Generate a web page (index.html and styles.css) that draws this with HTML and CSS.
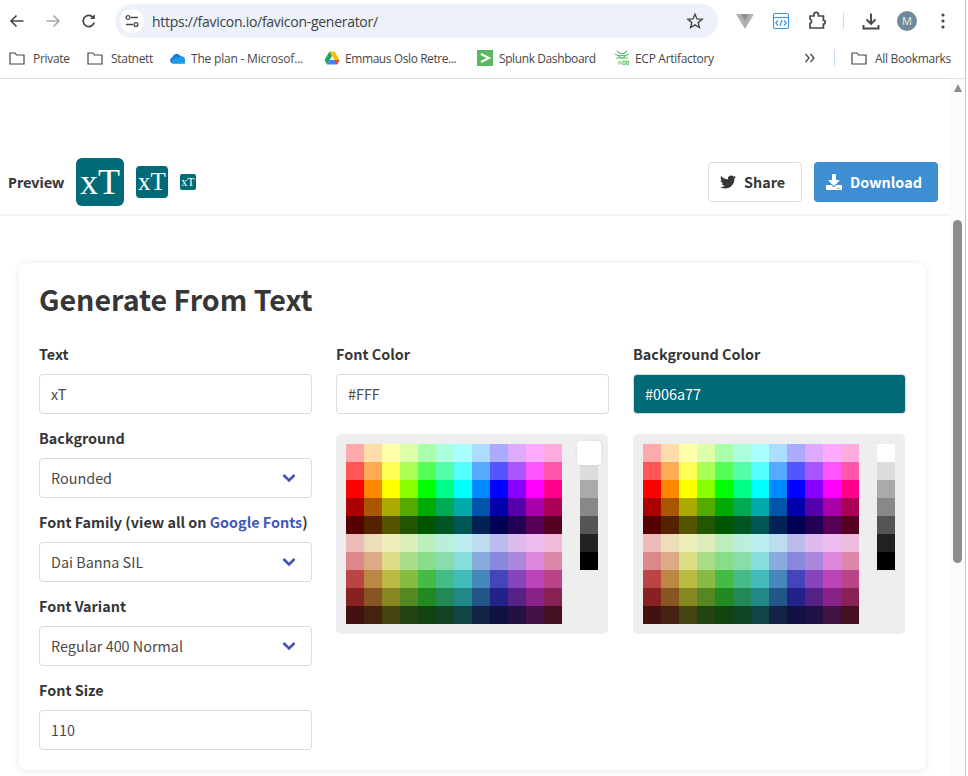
FILE: index.html
```html
<!DOCTYPE html>
<html lang="en">
<head>
<meta charset="utf-8">
<title>Favicon Generator</title>
<link rel="stylesheet" href="styles.css">
</head>
<body>
<div class="window">
  <div class="browser">
    <header class="chrome">
      <div class="toolbar">
        <svg class="tb-icon" viewBox="0 0 20 20"><path d="M16.500 10H4.500M9.500 4.500 4 10l5.500 5.500" fill="none" stroke="#474747" stroke-width="1.700"/></svg>
        <svg class="tb-icon" viewBox="0 0 20 20"><path d="M3.500 10h12M10.500 4.500 16 10l-5.500 5.500" fill="none" stroke="#ababab" stroke-width="1.700"/></svg>
        <svg class="tb-icon" viewBox="0 0 20 20"><path d="M15.200 11.500A5.600 5.600 0 1 1 14 6.300" fill="none" stroke="#474747" stroke-width="1.700"/><path d="M15.800 3.300v4.800H11z" fill="#474747"/></svg>
        <div class="omnibox">
          <span class="tune"><svg class="tune-svg" viewBox="0 0 16 16"><path d="M7 4.500h7M2 11.500h7" fill="none" stroke="#474747" stroke-width="1.400"/><circle cx="4" cy="4.500" r="1.900" fill="none" stroke="#474747" stroke-width="1.300"/><circle cx="12" cy="11.500" r="1.900" fill="none" stroke="#474747" stroke-width="1.300"/></svg></span>
          <span class="url">https://favicon.io/favicon-generator/</span>
          <svg class="star" viewBox="0 0 20 20"><path d="m10 3.200 2 4.700 5.100.4-3.900 3.300 1.200 5L10 13.900 5.600 16.600l1.200-5-3.900-3.300 5.100-.4z" fill="none" stroke="#474747" stroke-width="1.400"/></svg>
        </div>
        <div class="tb-right">
          <svg class="tb-icon" viewBox="0 0 20 20"><path d="M1 3h18l-9 15z" fill="#b0b0b0"/><path d="M6 3h8l-4 7z" fill="#8f8f8f"/></svg>
          <svg class="tb-icon" viewBox="0 0 20 20"><rect x="2.500" y="2.500" width="15" height="15" rx="1.500" fill="none" stroke="#3f93e6" stroke-width="1.100"/><path d="M2.500 6.500h15" stroke="#3f93e6" stroke-width="1.100"/><path d="M7 9.500 4.800 12 7 14.500M13 9.500l2.200 2.500-2.200 2.500M11 9l-2 6" fill="none" stroke="#3f93e6" stroke-width="1.200"/></svg>
          <svg class="tb-icon" viewBox="0 0 20 20"><path d="M3 6h4V4.500a2.200 2.200 0 0 1 4.400 0V6h5v4.500h1a2.200 2.200 0 0 1 0 3.500h-1v4H3v-4.500a2.400 2.400 0 0 0 0-4.500z" transform="translate(0 -1)" fill="none" stroke="#474747" stroke-width="1.700"/></svg>
          <span class="tb-divider"></span>
          <svg class="tb-icon" viewBox="0 0 20 20"><path d="M10 2.500v10M5.500 8.500 10 13l4.500-4.500" fill="none" stroke="#474747" stroke-width="1.900"/><path d="M2.500 14v3.500h15V14" fill="none" stroke="#474747" stroke-width="1.900"/></svg>
          <span class="avatar">M</span>
          <svg class="tb-icon" viewBox="0 0 20 20"><circle cx="10" cy="4" r="1.600" fill="#474747"/><circle cx="10" cy="10" r="1.600" fill="#474747"/><circle cx="10" cy="16" r="1.600" fill="#474747"/></svg>
        </div>
      </div>
      <nav class="bookmarks">
        <span class="bm bm-a"><svg class="bm-icon" viewBox="0 0 16 16"><path d="M1 3h5l1.500 2H15v9H1z" fill="none" stroke="#474747" stroke-width="1.200"/></svg>Private</span>
        <span class="bm bm-b"><svg class="bm-icon" viewBox="0 0 16 16"><path d="M1 3h5l1.500 2H15v9H1z" fill="none" stroke="#474747" stroke-width="1.200"/></svg>Statnett</span>
        <span class="bm bm-c"><svg class="bm-icon" viewBox="0 0 16 16"><path d="M4 13.500a3 3 0 0 1-.6-5.900 4.400 4.400 0 0 1 8.200-1.300 3.600 3.600 0 0 1 4.200 3.200 2.200 2.200 0 0 1-.6 4z" fill="#0f78d4"/><path d="M4 13.500a2.200 2.200 0 0 1 .5-4.300 3 3 0 0 1 5-1.300 3.200 3.200 0 0 1 5.800 5.600z" fill="#1c9be8"/></svg>The plan - Microsof...</span>
        <span class="bm bm-d"><svg class="bm-icon" viewBox="0 0 16 16"><path d="M5.500 1.500h5L15.500 10h-5z" fill="#fbbc04"/><path d="M5.500 1.500 .5 10 3 14.500 8 6z" fill="#1fa463"/><path d="M3 14.500h10l2.500-4.500h-10z" fill="#4285f4"/><path d="M13 14.500 15.500 10h-5z" fill="#ea4335"/></svg>Emmaus Oslo Retre...</span>
        <span class="bm bm-e"><svg class="bm-icon" viewBox="0 0 16 16"><rect width="16" height="16" fill="#5cb85c"/><path d="m4 4 8 4-8 4" fill="none" stroke="#fff" stroke-width="2"/></svg>Splunk Dashboard</span>
        <span class="bm bm-f"><svg class="bm-icon" viewBox="0 0 16 16"><path d="M3 1l3 2.500h4L13 1M1 4l3 1.500h8L15 4M4 5.500l4 3 4-3M2 8h12" fill="none" stroke="#5cc46a" stroke-width="1.100"/><path d="M5 11v3.500M7 11v3.500M9 11v3.500h2v-3.500H9M12.500 11h1.800v3.500h-1.800z" fill="none" stroke="#5cc46a" stroke-width="1"/></svg>ECP Artifactory</span>
        <span class="bm-spacer"></span>
        <svg class="chev-more" viewBox="0 0 12 12"><path d="M1.500 2 5 6l-3.500 4M6.500 2 10 6l-3.500 4" fill="none" stroke="#474747" stroke-width="1.300"/></svg>
        <span class="bm-divider"></span>
        <span class="bm bm-all"><svg class="bm-icon" viewBox="0 0 16 16"><path d="M1 3h5l1.500 2H15v9H1z" fill="none" stroke="#474747" stroke-width="1.200"/></svg>All Bookmarks</span>
      </nav>
    </header>
    <div class="viewport">
      <main class="page">
        <section class="preview-bar">
          <div class="preview-left">
            <strong class="preview-label">Preview</strong>
            <span class="fav fav-48">xT</span>
            <span class="fav fav-32">xT</span>
            <span class="fav fav-16">xT</span>
          </div>
          <div class="preview-actions">
            <a class="btn btn-share"><svg class="btn-icon" viewBox="0 0 512 512"><path fill="#363636" d="M459.370 151.716c.325 4.548.325 9.097.325 13.645 0 138.720-105.583 298.558-298.558 298.558-59.452 0-114.680-17.219-161.137-47.106 8.447.974 16.568 1.299 25.340 1.299 49.055 0 94.213-16.568 130.274-44.832-46.132-.975-84.792-31.188-98.112-72.772 6.498.974 12.995 1.624 19.818 1.624 9.421 0 18.843-1.300 27.614-3.573-48.081-9.747-84.143-51.980-84.143-102.985v-1.299c13.969 7.797 30.214 12.670 47.431 13.319-28.264-18.843-46.781-51.005-46.781-87.391 0-19.492 5.197-37.360 14.294-52.954 51.655 63.675 129.300 105.258 216.365 109.807-1.624-7.797-2.599-15.918-2.599-24.040 0-57.828 46.782-104.934 104.934-104.934 30.213 0 57.502 12.670 76.670 33.137 23.715-4.548 46.456-13.320 66.599-25.340-7.798 24.366-24.366 44.833-46.132 57.827 21.117-2.273 41.584-8.122 60.426-16.243-14.292 20.791-32.161 39.308-52.628 54.253z"/></svg><span class="btn-text">Share</span></a>
            <a class="btn btn-download"><svg class="btn-icon" viewBox="0 0 512 512"><path fill="#fff" d="M216 0h80c13.300 0 24 10.700 24 24v168h87.700c17.800 0 26.700 21.500 14.100 34.100L269.700 378.300c-7.500 7.500-19.800 7.500-27.300 0L90.100 226.100c-12.600-12.600-3.700-34.100 14.100-34.100H192V24c0-13.300 10.700-24 24-24zm296 376v112c0 13.300-10.700 24-24 24H24c-13.300 0-24-10.700-24-24V376c0-13.300 10.700-24 24-24h146.700l49 49c20.100 20.100 52.500 20.100 72.600 0l49-49H488c13.300 0 24 10.700 24 24zm-124 88c0-11-9-20-20-20s-20 9-20 20 9 20 20 20 20-9 20-20zm64 0c0-11-9-20-20-20s-20 9-20 20 9 20 20 20 20-9 20-20z"/></svg><span class="btn-text">Download</span></a>
          </div>
        </section>
        <section class="card">
          <h1 class="title">Generate From Text</h1>
          <div class="columns">
            <div class="col">
              <div class="field"><label class="label">Text</label><div class="control">xT</div></div>
              <div class="field"><label class="label">Background</label><div class="control control-select">Rounded<svg class="chevron" viewBox="0 0 14 10"><path d="M1.500 2 7 7.500 12.500 2" fill="none" stroke="#4353b3" stroke-width="2.600"/></svg></div></div>
              <div class="field"><label class="label">Font Family (view all on <a class="link">Google Fonts</a>)</label><div class="control control-select">Dai Banna SIL<svg class="chevron" viewBox="0 0 14 10"><path d="M1.500 2 7 7.500 12.500 2" fill="none" stroke="#4353b3" stroke-width="2.600"/></svg></div></div>
              <div class="field"><label class="label">Font Variant</label><div class="control control-select">Regular 400 Normal<svg class="chevron" viewBox="0 0 14 10"><path d="M1.500 2 7 7.500 12.500 2" fill="none" stroke="#4353b3" stroke-width="2.600"/></svg></div></div>
              <div class="field field-last"><label class="label">Font Size</label><div class="control">110</div></div>
            </div>
            <div class="col">
              <div class="field"><label class="label">Font Color</label><div class="control">#FFF</div></div>
              <div class="picker" data-selected="0"></div>
            </div>
            <div class="col">
              <div class="field"><label class="label">Background Color</label><div class="control control-teal">#006a77</div></div>
              <div class="picker"></div>
            </div>
          </div>
        </section>
      </main>
      <aside class="scrollbar">
        <span class="scroll-arrow"></span>
        <span class="scroll-thumb"></span>
      </aside>
    </div>
  </div>
  <div class="edge"></div>
</div>
<script src="picker.js"></script>
</body>
</html>
```
FILE: styles.css
```css
* { box-sizing: border-box; }
html, body { margin: 0; height: 100%; overflow: hidden; background: #fff; }
body { font-family: "Noto Sans CJK SC", "Liberation Sans", sans-serif; color: #363636; }

.window { display: flex; height: 776px; width: 968px; }
.browser { flex: 1; min-width: 0; display: flex; flex-direction: column; }
.edge { width: 3px; border-left: 1.500px solid #c4c4c4; background: #fff; }

.chrome { height: 79px; flex: none; border-bottom: 1px solid #e0e0e0; background: #fff; }
.toolbar { height: 38px; padding: 4px 12px 0 7px; display: flex; align-items: center; gap: 16px; }
.tb-icon { width: 20px; height: 20px; flex: none; display: block; }
.omnibox { flex: 1; height: 34px; border-radius: 17px; background: #edf2fa; display: flex; align-items: center; padding: 0 13px 0 5px; }
.tune { width: 24px; height: 24px; border-radius: 50%; background: #fff; display: flex; align-items: center; justify-content: center; }
.tune-svg { width: 16px; height: 16px; }
.url { flex: 1; margin-left: 8px; font: 14px "Open Sans", sans-serif; color: #3c4043; letter-spacing: -.28px; }
.star { width: 20px; height: 20px; display: block; }
.tb-right { display: flex; align-items: center; gap: 16px; margin-left: 1px; }
.tb-divider { width: 1px; height: 16px; background: #c9d9f2; margin-right: 1px; }
.avatar { width: 20px; height: 20px; border-radius: 50%; background: #708a9a; color: #e8eef1; font: 11px/20px "Open Sans", sans-serif; text-align: center; }

.bookmarks { height: 40px; padding: 0 14px 0 9px; display: flex; align-items: center; font: 12px "Open Sans", sans-serif; color: #474747; white-space: nowrap; letter-spacing: -.3px; }
.bm { display: flex; align-items: center; gap: 8px; flex: none; }
.bm-icon { width: 16px; height: 16px; flex: none; display: block; }
.bm-a { width: 78px; }
.bm-b { width: 82px; }
.bm-c { width: 155px; gap: 6px; letter-spacing: -.2px; }
.bm-d { width: 153px; gap: 5px; letter-spacing: -.42px; }
.bm-e { width: 137px; gap: 6px; letter-spacing: -.4px; }
.bm-f { gap: 5px; }
.bm-spacer { flex: 1; }
.chev-more { width: 12px; height: 12px; margin-right: 18px; display: block; }
.bm-divider { width: 1px; height: 16px; background: #c9d9f2; margin-right: 16px; }

.viewport { flex: 1; min-height: 0; display: flex; }
.page { flex: 1; min-width: 0; overflow: hidden; background: #fff; }
.scrollbar { width: 15px; flex: none; background: #fbfbfb; display: flex; flex-direction: column; align-items: center; padding: 5px 0 0 0; }
.scroll-arrow { width: 0; height: 0; border-left: 4.500px solid transparent; border-right: 4.500px solid transparent; border-bottom: 8px solid #8d8d8d; }
.scroll-thumb { width: 9px; height: 343px; margin-top: 128px; background: #8d8d8d; border-radius: 5px; }

.preview-bar { height: 137px; padding: 79px 12px 8px 8px; display: flex; justify-content: space-between; align-items: center; border-bottom: 2px solid #f5f5f5; }
.preview-left { display: flex; align-items: center; gap: 12px; }
.preview-label { width: 56px; font: 700 14.300px "Noto Sans", sans-serif; color: #363636; white-space: nowrap; }
.fav { display: block; background: #006a77; color: #fff; font-family: "Liberation Serif", serif; text-align: center; }
.fav-48 { width: 48px; height: 48px; border-radius: 6px; font-size: 36px; line-height: 48px; }
.fav-32 { width: 32px; height: 32px; border-radius: 4px; font-size: 25px; line-height: 32px; }
.fav-16 { width: 16px; height: 16px; border-radius: 2px; font-size: 12px; line-height: 16px; }
.preview-actions { display: flex; gap: 12px; }
.btn { height: 40px; border-radius: 4px; display: flex; align-items: center; gap: 8px; font-size: 14.400px; font-weight: 700; }
.btn-text { padding-bottom: 2px; }
.btn-icon { width: 16px; height: 16px; display: block; flex: none; }
.btn-share { width: 94px; padding-left: 11px; background: #fff; border: 1px solid #dbdbdb; color: #363636; }
.btn-download { width: 124px; padding-left: 12px; background: #3f8ed2; color: #fff; }

.card { margin: 47px 0 0 19px; width: 907px; height: 507px; padding: 20px; background: #fff; border-radius: 8px; box-shadow: 0 1px 8px rgba(0, 0, 0, .09); }
.title { margin: 0 0 19px; height: 40px; font-size: 28.600px; line-height: 32px; font-weight: 700; color: #363636; white-space: nowrap; }
.columns { display: grid; grid-template-columns: repeat(3, 273px); gap: 24px; }
.field { margin-bottom: 12px; }
.col > .field:has(+ .picker) { margin-bottom: 20px; }
.field-last { margin-bottom: 0; }
.label { display: block; height: 24px; margin-bottom: 8px; font-size: 14.400px; line-height: 24px; font-weight: 700; color: #363636; white-space: nowrap; }
.link { color: #4458b8; }
.control { height: 40px; border: 1px solid #dbdbdb; border-radius: 4px; background: #fff; padding: 0 11px 2px; display: flex; align-items: center; justify-content: space-between; font-size: 14.400px; color: #4a4a4a; }
.control-teal { background: #006a77; color: #fff; }
.chevron { width: 14px; height: 10px; margin: 2px 4px 0 0; display: block; }

.picker { width: 272px; height: 200px; padding: 10px; background: #eee; border-radius: 5px; display: flex; gap: 18px; align-items: flex-start; }
.swatches { display: grid; grid-template-columns: repeat(12, 18px); grid-auto-rows: 18px; }
.greys { display: grid; grid-template-columns: 18px; grid-auto-rows: 18px; }
.sw { display: block; }
.sw-selected { transform: scale(1.333); border-radius: 3px; box-shadow: 0 0 3px rgba(0, 0, 0, .08); position: relative; }
```
FILE: picker.js
```js
var rows = [
  "faa fda ffa dfa afa afd aff adf aaf daf faf fad",
  "f55 fa5 ff5 af5 5f5 5fa 5ff 5af 55f a5f f5f f5a",
  "f00 f80 ff0 8f0 0f0 0f8 0ff 08f 00f 80f f0f f08",
  "a00 a50 aa0 5a0 0a0 0a5 0aa 05a 00a 50a a0a a05",
  "500 520 550 250 050 052 055 025 005 205 505 502",
  "ebb edb eeb deb beb bed bee bde bbe dbe ebe ebd",
  "d88 da8 dd8 ad8 8d8 8da 8dd 8ad 88d a8d d8d d8a",
  "b44 b84 bb4 8b4 4b4 4b8 4bb 48b 44b 84b b4b b48",
  "822 852 882 582 282 285 288 258 228 528 828 825",
  "411 421 441 241 141 142 144 124 114 214 414 412"
];
var greys = "fff ddd aaa 888 555 222 000".split(" ");
function swatch(c, selected) {
  var s = document.createElement("span");
  s.className = selected ? "sw sw-selected" : "sw";
  s.style.background = "#" + c;
  return s;
}
document.querySelectorAll(".picker").forEach(function (p) {
  var a = document.createElement("div");
  a.className = "swatches";
  rows.forEach(function (r) {
    r.split(" ").forEach(function (c) { a.appendChild(swatch(c, false)); });
  });
  var b = document.createElement("div");
  b.className = "greys";
  greys.forEach(function (c, i) {
    b.appendChild(swatch(c, p.dataset.selected === String(i)));
  });
  p.appendChild(a);
  p.appendChild(b);
});
```
